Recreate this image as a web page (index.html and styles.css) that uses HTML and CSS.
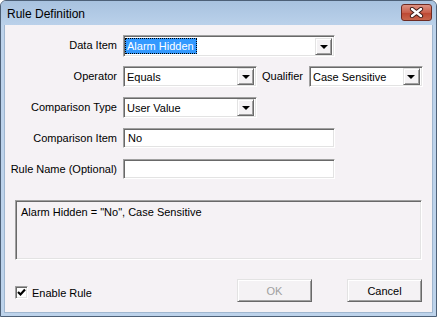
FILE: index.html
```html
<!DOCTYPE html>
<html lang="en">
<head>
    <meta charset="UTF-8">
    <title>Rule Definition</title>
    <link rel="stylesheet" href="styles.css">
</head>
<body>
    <div class="window">
        <!-- Title bar -->
        <div class="titlebar">
            <span class="title">Rule Definition</span>
            <div class="close-btn">
                <svg width="15" height="11" viewBox="0 0 15 11">
                    <path d="M3 2 L12 9 M12 2 L3 9" stroke="#3b1a16" stroke-width="4.2" stroke-linecap="round"/>
                    <path d="M3 2 L12 9 M12 2 L3 9" stroke="#fff" stroke-width="2.4" stroke-linecap="round"/>
                </svg>
            </div>
        </div>

        <!-- Client area -->
        <div class="client">
            <div class="form">
                <div class="row">
                    <label class="label">Data Item</label>
                    <div class="combo combo-wide">
                        <div class="combo-text"><span class="selected">Alarm Hidden</span></div>
                        <div class="drop-btn"><span class="arrow"></span></div>
                    </div>
                </div>
                <div class="row">
                    <label class="label">Operator</label>
                    <div class="combo combo-mid">
                        <div class="combo-text">Equals</div>
                        <div class="drop-btn"><span class="arrow"></span></div>
                    </div>
                    <label class="label-inline">Qualifier</label>
                    <div class="combo combo-qual">
                        <div class="combo-text">Case Sensitive</div>
                        <div class="drop-btn"><span class="arrow"></span></div>
                    </div>
                </div>
                <div class="row">
                    <label class="label">Comparison Type</label>
                    <div class="combo combo-mid">
                        <div class="combo-text">User Value</div>
                        <div class="drop-btn"><span class="arrow"></span></div>
                    </div>
                </div>
                <div class="row">
                    <label class="label">Comparison Item</label>
                    <div class="textbox">No</div>
                </div>
                <div class="row">
                    <label class="label">Rule Name (Optional)</label>
                    <div class="textbox"></div>
                </div>
            </div>

            <div class="summary">Alarm Hidden = "No", Case Sensitive</div>

            <div class="footer">
                <div class="enable">
                    <span class="checkbox">
                        <svg width="9" height="9" viewBox="0 0 9 9">
                            <path d="M1 4 L3.5 6.5 L8 1.5" stroke="#000" stroke-width="2.2" fill="none"/>
                        </svg>
                    </span>
                    <span>Enable Rule</span>
                </div>
                <div class="button disabled">OK</div>
                <div class="button">Cancel</div>
            </div>
        </div>
    </div>
</body>
</html>
```

FILE: styles.css
```css
* {
    margin: 0;
    padding: 0;
    box-sizing: border-box;
}

body {
    font-family: 'Liberation Sans', Arial, sans-serif;
    font-size: 11px;
    color: #000;
    background: #fff;
}

/* Window frame */
.window {
    width: 437px;
    height: 317px;
    background: #bdd3eb;
    border: 1px solid #4d6077;
    border-radius: 6px 6px 0 0;
    padding: 0 3px 3px;
    display: flex;
    flex-direction: column;
}

.titlebar {
    height: 24px;
    display: flex;
    align-items: center;
    justify-content: space-between;
    background: linear-gradient(#a8c2df, #bad1ea);
    margin: 0 -3px;
    padding: 0 4px 0 6px;
    border-radius: 5px 5px 0 0;
}

.title {
    font-size: 12px;
    color: #000;
    margin-top: 1px;
}

.close-btn {
    width: 31px;
    height: 17px;
    margin-top: -2px;
    border: 1px solid #6e2a22;
    border-radius: 3px;
    background: linear-gradient(#dd9283, #c9604c 50%, #bd4631 51%, #c8664c);
    display: flex;
    align-items: center;
    justify-content: center;
}

.client {
    flex: 1;
    background: #f5f2f5;
    border: 1px solid #9fb6cf;
    border-top: none;
    padding-top: 10px;
    display: flex;
    flex-direction: column;
}

/* Form rows */
.row {
    height: 31px;
    display: flex;
    align-items: flex-start;
}

.label {
    width: 112px;
    text-align: right;
    margin-right: 6px;
    line-height: 21px;
}

.label-inline {
    line-height: 21px;
    margin: 0 6px 0 5px;
}

.combo,
.textbox {
    height: 21px;
    background: #fff;
    border: 1px solid;
    border-color: #a0a0a0 #fff #fff #a0a0a0;
    box-shadow: inset 1px 1px #696969, inset -1px -1px #e3e3e3;
    display: flex;
    align-items: center;
}

.combo-wide { width: 212px; height: 22px; }
.combo-mid { width: 134px; }
.combo-qual { width: 114px; }

.combo-text {
    flex: 1;
    padding-left: 3px;
    white-space: nowrap;
    overflow: hidden;
}

.combo-wide .combo-text {
    padding-left: 1px;
}

.selected {
    display: inline-block;
    background: #3399ff;
    color: #fff;
    outline: 1px dotted #000;
    outline-offset: -1px;
    line-height: 16px;
    padding: 0 3px 0 2px;
}

.drop-btn {
    width: 17px;
    height: 17px;
    margin-right: 2px;
    background: #f4f2f4;
    border: 1px solid;
    border-color: #e3e3e3 #696969 #696969 #e3e3e3;
    box-shadow: inset 1px 1px #fff, inset -1px -1px #a0a0a0;
    display: flex;
    align-items: center;
    justify-content: center;
}

.arrow {
    width: 0;
    height: 0;
    border-left: 4px solid transparent;
    border-right: 4px solid transparent;
    border-top: 4px solid #000;
    margin-top: 1px;
}

.textbox {
    width: 212px;
    height: 20px;
    padding-left: 4px;
}

/* Summary */
.summary {
    margin: 10px 10px 0;
    height: 60px;
    border: 1px solid;
    border-color: #a0a0a0 #fff #fff #a0a0a0;
    box-shadow: inset 1px 1px #696969, inset -1px -1px #e3e3e3;
    padding: 5px 5px;
}

/* Footer */
.footer {
    margin-top: 19px;
    display: flex;
    align-items: center;
    padding-left: 10px;
}

.enable {
    flex: 1;
    display: flex;
    align-items: center;
    margin-top: 4px;
}

.checkbox {
    width: 13px;
    height: 13px;
    background: #fff;
    border: 1px solid;
    border-color: #a0a0a0 #fff #fff #a0a0a0;
    box-shadow: inset 1px 1px #696969, inset -1px -1px #e3e3e3;
    display: flex;
    align-items: center;
    justify-content: center;
    margin-right: 4px;
}

.button {
    width: 75px;
    height: 23px;
    background: #f4f2f4;
    border: 1px solid;
    border-color: #e3e3e3 #696969 #696969 #e3e3e3;
    box-shadow: inset 1px 1px #fff, inset -1px -1px #a0a0a0;
    display: flex;
    align-items: center;
    justify-content: center;
    margin-right: 10px;
}

.button.disabled {
    color: #a0a0a0;
    margin-right: 35px;
}
```
